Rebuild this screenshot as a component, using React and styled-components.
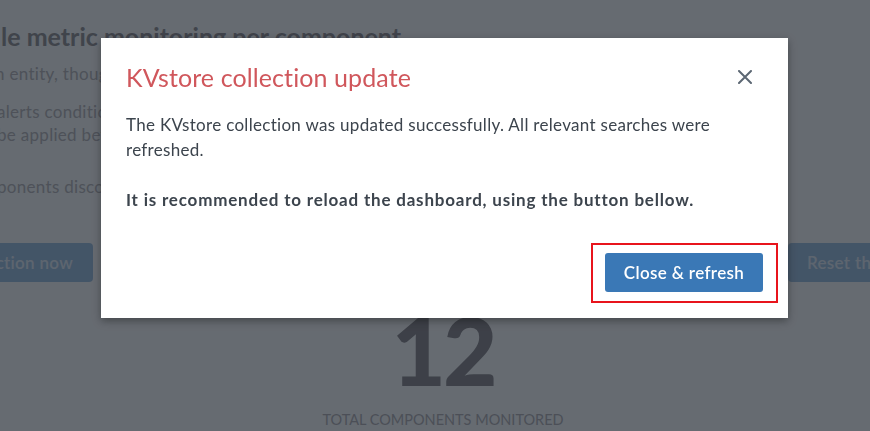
import React from "react";
import styled, { createGlobalStyle } from "styled-components";

const GlobalStyle = createGlobalStyle`
    html, body {
        margin: 0;
        padding: 0;
        background: #ffffff;
        font-family: Lato, "Open Sans", "Liberation Sans", sans-serif;
        overflow: hidden;
    }
`;

const Dashboard = () => {
    return (
        <Page>
            <Panel>
                <PanelTitle>le metric monitoring per component</PanelTitle>
                <PanelText shift={-5}>n entity, though the metrics are collected per component</PanelText>
                <PanelText gap={15} shift={-3}>alerts conditions can be defined per component, these will</PanelText>
                <PanelText shift={-3}>be applied before the global alerting</PanelText>
                <PanelText gap={29} shift={-3}>ponents discovered are listed below</PanelText>
            </Panel>
            <ButtonRow>
                <GhostButton cut>ction now</GhostButton>
                <GhostButton>Reset the collection</GhostButton>
            </ButtonRow>
            <SingleValue>
                <BigNumber>12</BigNumber>
                <ValueLabel>TOTAL COMPONENTS MONITORED</ValueLabel>
            </SingleValue>
        </Page>
    );
};

const App = () => {
    return (
        <>
            <GlobalStyle />
            <Dashboard />
            <Backdrop />
            <Modal>
                <ModalHeader>
                    <ModalTitle>KVstore collection update</ModalTitle>
                    <CloseButton aria-label="Close">
                        <svg width="14" height="14" viewBox="0 0 14 14">
                            <path d="M1 1 L13 13 M13 1 L1 13" stroke="#5c6773" strokeWidth="2" strokeLinecap="round" />
                        </svg>
                    </CloseButton>
                </ModalHeader>
                <ModalBody>
                    <p>
                        The KVstore collection was updated successfully. All relevant searches were
                        refreshed.
                    </p>
                    <p>
                        <strong>It is recommended to reload the dashboard, using the button bellow.</strong>
                    </p>
                </ModalBody>
                <ModalFooter>
                    <Highlight>
                        <PrimaryButton>Close &amp; refresh</PrimaryButton>
                    </Highlight>
                </ModalFooter>
            </Modal>
        </>
    );
};

const Page = styled.div`
    width: 870px;
    height: 431px;
    display: flex;
    flex-direction: column;
    color: #9d9a9e;
`;

const Panel = styled.section`
    padding-top: 21px;
    display: flex;
    flex-direction: column;
`;

const PanelTitle = styled.h2`
    margin: 0 0 11px 1px;
    font-size: 25px;
    font-weight: 700;
    line-height: 30px;
    color: #a09da1;
    white-space: nowrap;
`;

const PanelText = styled.p`
    margin: ${props => props.gap || 0}px 0 0 ${props => props.shift || 0}px;
    font-size: 17px;
    line-height: 23px;
    letter-spacing: 0.3px;
    color: #c2bfc3;
    white-space: nowrap;
`;

const ButtonRow = styled.div`
    margin-top: 45px;
    display: flex;
    justify-content: space-between;
`;

const GhostButton = styled.button`
    flex: none;
    height: 39px;
    width: ${props => (props.cut ? "93px" : "182px")};
    margin-right: ${props => (props.cut ? "0" : "-100px")};
    padding: ${props => (props.cut ? "0 20px 0 0" : "0 19px")};
    border: none;
    border-radius: ${props => (props.cut ? "0 4px 4px 0" : "4px")};
    background: #a9c8e6;
    color: #e8f1fb;
    font-family: inherit;
    font-size: 17px;
    font-weight: 600;
    letter-spacing: 0.3px;
    text-align: ${props => (props.cut ? "right" : "left")};
    white-space: nowrap;
    overflow: hidden;
    direction: ${props => (props.cut ? "rtl" : "ltr")};
`;

const SingleValue = styled.div`
    margin-top: 28px;
    padding-left: 16px;
    display: flex;
    flex-direction: column;
    align-items: center;
`;

const BigNumber = styled.div`
    font-size: 94px;
    font-weight: 900;
    line-height: 80px;
    color: #989598;
    letter-spacing: -3px;
`;

const ValueLabel = styled.div`
    margin-top: 21px;
    font-size: 14.5px;
    color: #bdbabe;
`;

const Backdrop = styled.div`
    position: fixed;
    inset: 0;
    background: rgba(0, 8, 18, 0.6);
`;

const Modal = styled.div`
    position: fixed;
    left: 101px;
    top: 38px;
    width: 687px;
    height: 280px;
    box-sizing: border-box;
    background: #ffffff;
    box-shadow: 0 3px 8px rgba(0, 0, 0, 0.35);
    display: flex;
    flex-direction: column;
    color: #3c444d;
`;

const ModalHeader = styled.div`
    padding: 22px 33px 0 25px;
    display: flex;
    align-items: center;
    justify-content: space-between;
`;

const ModalTitle = styled.h3`
    margin: 0;
    font-size: 25px;
    font-weight: 400;
    line-height: 34px;
    letter-spacing: 0.1px;
    color: #d0575c;
`;

const CloseButton = styled.button`
    width: 20px;
    height: 20px;
    padding: 0;
    border: none;
    background: none;
    display: flex;
    align-items: center;
    justify-content: center;
`;

const ModalBody = styled.div`
    padding: 18px 25px 0;
    font-size: 17px;
    line-height: 25px;
    letter-spacing: 0.3px;

    p {
        margin: 0 0 25px;
    }
    strong {
        font-weight: 700;
        letter-spacing: 0.8px;
    }
`;

const ModalFooter = styled.div`
    margin-top: auto;
    padding: 0 10px 15px;
    display: flex;
    justify-content: flex-end;
`;

const Highlight = styled.div`
    border: 2px solid #e8141c;
    padding: 8px 13px 9px 12px;
`;

const PrimaryButton = styled.button`
    height: 39px;
    width: 158px;
    border: none;
    border-radius: 3px;
    background: #3a78b6;
    color: #ffffff;
    font-family: inherit;
    font-size: 17px;
    font-weight: 600;
    letter-spacing: 0.35px;
`;

export default App;
